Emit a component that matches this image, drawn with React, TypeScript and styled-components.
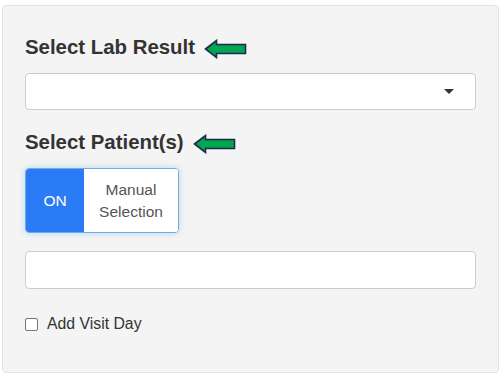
import React from 'react';
import styled, {createGlobalStyle} from "styled-components";

const GlobalStyle = createGlobalStyle`
    body {
        margin: 0;
        background: #ffffff;
        font-family: "Liberation Sans", Arial, sans-serif;
        color: #333333;
    }
`

const Arrow = () => (
    <svg width="43" height="20" viewBox="0 0 43 20">
        <polygon points="1.5,10 12.5,1.5 12.5,5.5 41.5,5.5 41.5,14.5 12.5,14.5 12.5,18.5"
                 fill="#00a651" stroke="#1c2a4e" strokeWidth="1.6" strokeLinejoin="miter"/>
    </svg>
)

export default function App() {
    return (
        <Page>
            <GlobalStyle/>
            <Panel>
                <Label>
                    Select Lab Result
                    <Arrow/>
                </Label>
                <SelectBox>
                    <Caret/>
                </SelectBox>

                <Label $top={21}>
                    Select Patient(s)
                    <Arrow/>
                </Label>
                <Toggle>
                    <OnPart>ON</OnPart>
                    <OffPart>Manual<br/>Selection</OffPart>
                </Toggle>

                <TextInput/>

                <CheckRow>
                    <Box/>
                    <span>Add Visit Day</span>
                </CheckRow>
            </Panel>
        </Page>
    );
}

const Page = styled.div`
    padding: 5px 3px 0 2px;
`
const Panel = styled.div`
    box-sizing: border-box;
    height: 368px;
    background: #f4f4f4;
    border: 1px solid #e3e3e3;
    border-radius: 4px;
    padding: 30px 22px 0 22px;
    display: flex;
    flex-direction: column;
    align-items: flex-start;
`
const Label = styled.div<{ $top?: number }>`
    display: flex;
    align-items: center;
    gap: 9px;
    margin-top: ${p => p.$top ?? 0}px;
    font-size: 20.4px;
    font-weight: bold;
    line-height: 22px;
    height: 22px;
    color: #333333;

    svg {
        margin-top: 4px;
    }
`
const SelectBox = styled.div`
    position: relative;
    box-sizing: border-box;
    margin-top: 15px;
    width: 100%;
    height: 37px;
    background: #ffffff;
    border: 1px solid #cccccc;
    border-radius: 4px;
`
const Caret = styled.span`
    position: absolute;
    right: 21px;
    top: 15px;
    width: 0;
    height: 0;
    border-left: 5px solid transparent;
    border-right: 5px solid transparent;
    border-top: 5px solid #333333;
`
const Toggle = styled.div`
    margin-top: 15px;
    display: flex;
    height: 65px;
    box-sizing: border-box;
    border: 1px solid #66afe9;
    border-radius: 4px;
    overflow: hidden;
    box-shadow: 0 0 6px rgba(102, 175, 233, 0.45);
    font-size: 15.5px;
`
const OnPart = styled.div`
    width: 58px;
    display: flex;
    align-items: center;
    justify-content: center;
    background: #2b7bf6;
    color: #ffffff;
`
const OffPart = styled.div`
    width: 94px;
    display: flex;
    align-items: center;
    justify-content: center;
    text-align: center;
    background: #ffffff;
    color: #555555;
    line-height: 22px;
`
const TextInput = styled.div`
    box-sizing: border-box;
    margin-top: 18px;
    width: 100%;
    height: 38px;
    background: #ffffff;
    border: 1px solid #cccccc;
    border-radius: 4px;
`
const CheckRow = styled.label`
    margin-top: 26px;
    display: flex;
    align-items: center;
    gap: 9px;
    font-size: 15.8px;
    line-height: 18px;
    color: #333333;
`
const Box = styled.span`
    box-sizing: border-box;
    width: 13px;
    height: 13px;
    border: 1px solid #767676;
    border-radius: 2px;
    background: #ffffff;
`
